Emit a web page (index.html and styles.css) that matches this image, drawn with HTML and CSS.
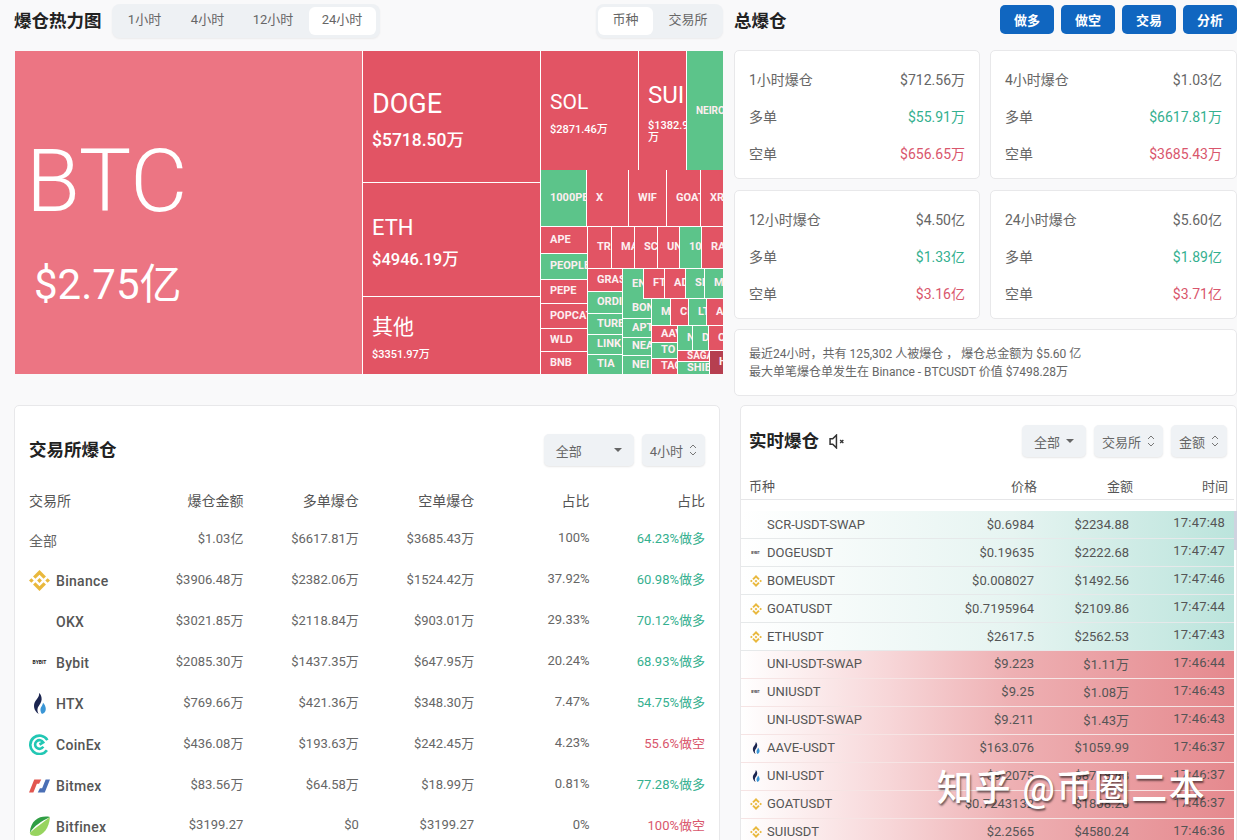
FILE: index.html
```html
<!DOCTYPE html>
<html lang="zh-CN">

<head>
  <meta charset="UTF-8" />
  <meta name="viewport" content="width=device-width, initial-scale=1.0" />
  <title>爆仓热力图</title>
  <link rel="stylesheet" href="styles.css">
</head>

<body>
  <svg class="defs" width="0" height="0">
    <symbol id="i-binance" viewBox="0 0 24 24">
      <path fill="#e9b83c" d="M7.34 10.08 12 5.42l4.66 4.66 2.71-2.71L12 0 4.63 7.37zM0 12l2.71-2.71L5.42 12l-2.71 2.71zM7.34 13.92 12 18.58l4.66-4.66 2.71 2.71L12 24l-7.37-7.37zM18.58 12l2.71-2.71L24 12l-2.71 2.71zM14.75 12 12 9.25 9.25 12 12 14.75z" />
    </symbol>
    <symbol id="i-htx" viewBox="0 0 24 24">
      <path fill="#1b2550" d="M11.5 0c.6 4-2.4 6.400-4.400 9.600C4.800 13.200 5 20 11.200 24 8.800 20.500 9.500 16.800 11.500 14.200c2.300-2.900 3.400-6 2.800-9.200C13.900 3 12.900 1 11.500 0z" />
      <path fill="#3a96d6" d="M16 11c-.1 2.200-1.500 3.800-2.400 5.600-1 2.200-.6 5.400 1.200 7.400 2.800-.8 4.400-3 4.400-5.800 0-2.700-1.400-5.400-3.200-7.200z" />
    </symbol>
    <symbol id="i-coinex" viewBox="0 0 24 24">
      <path fill="none" stroke="#22c7b4" stroke-width="3" d="M20.500 18.500A10.500 10.500 0 1 1 21 7" />
      <path fill="none" stroke="#22c7b4" stroke-width="3" d="M16.300 14.500a5 5 0 1 1 0-5L12 12" />
    </symbol>
    <symbol id="i-bitmex" viewBox="0 0 24 24">
      <path fill="#e2564f" d="M0 20 6 5h8l-2.500 5H9l-4 10z" />
      <path fill="#4a6fb5" d="M24 5 18 20h-8l2.500-5H15l4-10z" />
    </symbol>
    <symbol id="i-bitfinex" viewBox="0 0 24 24">
      <path fill="#2f9e44" d="M24 1C14-1 2 3 1 19c5-8 13-13 23-18z" />
      <path fill="#97d45f" d="M24 1c-1 14-10 25-21 21-1-.5-1.500-1.500-2-3C8 13 16 7 24 1z" />
    </symbol>
  </svg>

  <div class="page">
    <div class="col-left">
      <div class="head">
        <h1 class="title">爆仓热力图</h1>
        <div class="seg seg-time">
          <span class="seg-item">1小时</span>
          <span class="seg-item">4小时</span>
          <span class="seg-item">12小时</span>
          <span class="seg-item active">24小时</span>
        </div>
        <div class="seg seg-kind">
          <span class="seg-item active">币种</span>
          <span class="seg-item">交易所</span>
        </div>
      </div>

      <div class="heatmap" id="heatmap"></div>

      <div class="panel panel-ex">
        <div class="panel-head">
          <h2 class="title">交易所爆仓</h2>
          <div class="picks">
            <div class="pick pick-wide">全部
              <svg class="caret" width="8" height="4" viewBox="0 0 8 4"><path fill="#666" d="M0 0h8L4 4z" /></svg>
            </div>
            <div class="pick">4小时
              <svg class="updown" width="8" height="12" viewBox="0 0 8 12"><path fill="none" stroke="#777" d="M1 4l3-3 3 3M1 8l3 3 3-3" /></svg>
            </div>
          </div>
        </div>

        <table class="ex-table">
          <thead>
            <tr><th>交易所</th><th>爆仓金额</th><th>多单爆仓</th><th>空单爆仓</th><th>占比</th><th>占比</th></tr>
          </thead>
          <tbody>
            <tr>
              <td class="ex-all">全部</td>
              <td>$1.03亿</td><td>$6617.81万</td><td>$3685.43万</td><td>100%</td><td class="up">64.23%做多</td>
            </tr>
            <tr>
              <td><div class="ex"><svg class="ex-logo"><use href="#i-binance" /></svg>Binance</div></td>
              <td>$3906.48万</td><td>$2382.06万</td><td>$1524.42万</td><td>37.92%</td><td class="up">60.98%做多</td>
            </tr>
            <tr>
              <td><div class="ex"><span class="ex-logo"></span>OKX</div></td>
              <td>$3021.85万</td><td>$2118.84万</td><td>$903.01万</td><td>29.33%</td><td class="up">70.12%做多</td>
            </tr>
            <tr>
              <td><div class="ex"><span class="ex-logo bybit">BYBIT</span>Bybit</div></td>
              <td>$2085.30万</td><td>$1437.35万</td><td>$647.95万</td><td>20.24%</td><td class="up">68.93%做多</td>
            </tr>
            <tr>
              <td><div class="ex"><svg class="ex-logo"><use href="#i-htx" /></svg>HTX</div></td>
              <td>$769.66万</td><td>$421.36万</td><td>$348.30万</td><td>7.47%</td><td class="up">54.75%做多</td>
            </tr>
            <tr>
              <td><div class="ex"><svg class="ex-logo"><use href="#i-coinex" /></svg>CoinEx</div></td>
              <td>$436.08万</td><td>$193.63万</td><td>$242.45万</td><td>4.23%</td><td class="down">55.6%做空</td>
            </tr>
            <tr>
              <td><div class="ex"><svg class="ex-logo"><use href="#i-bitmex" /></svg>Bitmex</div></td>
              <td>$83.56万</td><td>$64.58万</td><td>$18.99万</td><td>0.81%</td><td class="up">77.28%做多</td>
            </tr>
            <tr>
              <td><div class="ex"><svg class="ex-logo"><use href="#i-bitfinex" /></svg>Bitfinex</div></td>
              <td>$3199.27</td><td>$0</td><td>$3199.27</td><td>0%</td><td class="down">100%做空</td>
            </tr>
          </tbody>
        </table>
      </div>
    </div>

    <div class="col-right">
      <div class="head">
        <h1 class="title">总爆仓</h1>
        <div class="actions">
          <button class="act">做多</button>
          <button class="act">做空</button>
          <button class="act">交易</button>
          <button class="act">分析</button>
        </div>
      </div>

      <div class="cards">
        <div class="card">
          <div class="line"><span>1小时爆仓</span><span>$712.56万</span></div>
          <div class="line"><span>多单</span><span class="up">$55.91万</span></div>
          <div class="line"><span>空单</span><span class="down">$656.65万</span></div>
        </div>
        <div class="card">
          <div class="line"><span>4小时爆仓</span><span>$1.03亿</span></div>
          <div class="line"><span>多单</span><span class="up">$6617.81万</span></div>
          <div class="line"><span>空单</span><span class="down">$3685.43万</span></div>
        </div>
        <div class="card">
          <div class="line"><span>12小时爆仓</span><span>$4.50亿</span></div>
          <div class="line"><span>多单</span><span class="up">$1.33亿</span></div>
          <div class="line"><span>空单</span><span class="down">$3.16亿</span></div>
        </div>
        <div class="card">
          <div class="line"><span>24小时爆仓</span><span>$5.60亿</span></div>
          <div class="line"><span>多单</span><span class="up">$1.89亿</span></div>
          <div class="line"><span>空单</span><span class="down">$3.71亿</span></div>
        </div>
      </div>

      <div class="notice">
        最近24小时，共有 125,302 人被爆仓 ， 爆仓总金额为 $5.60 亿<br>
        最大单笔爆仓单发生在 Binance - BTCUSDT 价值 $7498.28万
      </div>

      <div class="panel panel-live">
        <div class="panel-head">
          <div class="live-title">
            <h2 class="title">实时爆仓</h2>
            <svg class="mute" width="17" height="15" viewBox="0 0 16 14">
              <path fill="none" stroke="#333" stroke-width="1.400" d="M7 1v12L3.500 9.500H1v-5h2.500z" />
              <path fill="none" stroke="#333" stroke-width="1.300" d="M10.500 5.500l3 3M13.500 5.500l-3 3" />
            </svg>
          </div>
          <div class="picks">
            <div class="pick">全部
              <svg class="caret" width="8" height="4" viewBox="0 0 8 4"><path fill="#666" d="M0 0h8L4 4z" /></svg>
            </div>
            <div class="pick">交易所
              <svg class="updown" width="8" height="12" viewBox="0 0 8 12"><path fill="none" stroke="#777" d="M1 4l3-3 3 3M1 8l3 3 3-3" /></svg>
            </div>
            <div class="pick">金额
              <svg class="updown" width="8" height="12" viewBox="0 0 8 12"><path fill="none" stroke="#777" d="M1 4l3-3 3 3M1 8l3 3 3-3" /></svg>
            </div>
          </div>
        </div>

        <div class="live-head">
          <span>币种</span><span>价格</span><span>金额</span><span>时间</span>
        </div>

        <div class="live-list">
          <div class="thumb"></div>
          <div class="live long"><div class="coin">SCR-USDT-SWAP</div><span>$0.6984</span><span>$2234.88</span><span class="time">17:47:48</span></div>
          <div class="live long"><div class="coin"><span class="coin-bybit">BYBIT</span>DOGEUSDT</div><span>$0.19635</span><span>$2222.68</span><span class="time">17:47:47</span></div>
          <div class="live long"><div class="coin"><svg class="coin-logo"><use href="#i-binance" /></svg>BOMEUSDT</div><span>$0.008027</span><span>$1492.56</span><span class="time">17:47:46</span></div>
          <div class="live long"><div class="coin"><svg class="coin-logo"><use href="#i-binance" /></svg>GOATUSDT</div><span>$0.7195964</span><span>$2109.86</span><span class="time">17:47:44</span></div>
          <div class="live long"><div class="coin"><svg class="coin-logo"><use href="#i-binance" /></svg>ETHUSDT</div><span>$2617.5</span><span>$2562.53</span><span class="time">17:47:43</span></div>
          <div class="live short"><div class="coin">UNI-USDT-SWAP</div><span>$9.223</span><span>$1.11万</span><span class="time">17:46:44</span></div>
          <div class="live short"><div class="coin"><span class="coin-bybit">BYBIT</span>UNIUSDT</div><span>$9.25</span><span>$1.08万</span><span class="time">17:46:43</span></div>
          <div class="live short"><div class="coin">UNI-USDT-SWAP</div><span>$9.211</span><span>$1.43万</span><span class="time">17:46:43</span></div>
          <div class="live short"><div class="coin"><svg class="coin-logo"><use href="#i-htx" /></svg>AAVE-USDT</div><span>$163.076</span><span>$1059.99</span><span class="time">17:46:37</span></div>
          <div class="live short"><div class="coin"><svg class="coin-logo"><use href="#i-htx" /></svg>UNI-USDT</div><span>$9.2075</span><span>$8718.88</span><span class="time">17:46:37</span></div>
          <div class="live short"><div class="coin"><svg class="coin-logo"><use href="#i-binance" /></svg>GOATUSDT</div><span>$0.7243132</span><span>$1808.26</span><span class="time">17:46:37</span></div>
          <div class="live short"><div class="coin"><svg class="coin-logo"><use href="#i-binance" /></svg>SUIUSDT</div><span>$2.2565</span><span>$4580.24</span><span class="time">17:46:36</span></div>
        </div>
      </div>
    </div>
  </div>

  <div class="watermark">知乎 @币圈二本</div>

  <script>
    // name, x, y, w, h, colour, label size, value, value size
    const tiles = [
      ["BTC", 0, 0, 347, 323, "btc", 88, "$2.75亿", 42],
      ["DOGE", 348, 0, 177, 131, "red", 27, "$5718.50万", 17.5],
      ["ETH", 348, 132, 177, 113, "red", 22, "$4946.19万", 16.5],
      ["其他", 348, 246, 177, 77, "red", 21, "$3351.97万", 11],
      ["SOL", 526, 0, 97, 119, "red", 21, "$2871.46万", 11],
      ["SUI", 624, 0, 47, 119, "red", 24, "$1382.97万", 11],
      ["NEIRO", 672, 0, 36, 119, "green", 10],
      ["1000PE", 526, 119, 45, 56, "green", 11],
      ["X", 572, 119, 41, 56, "red", 11],
      ["WIF", 614, 119, 37, 56, "red", 11],
      ["GOAT", 652, 119, 33, 56, "red", 11],
      ["XR", 686, 119, 22, 56, "red", 11],
      ["APE", 526, 176, 46, 26, "red", 11],
      ["PEOPLE", 526, 203, 46, 25, "green", 11],
      ["PEPE", 526, 229, 46, 23, "red", 11],
      ["POPCAT", 526, 253, 46, 24, "red", 11],
      ["WLD", 526, 278, 46, 22, "red", 11],
      ["BNB", 526, 301, 46, 22, "red", 11],
      ["TR", 573, 176, 23, 41, "red", 11],
      ["MA", 597, 176, 22, 41, "red", 11],
      ["SC", 620, 176, 22, 41, "red", 11],
      ["UN", 643, 176, 21, 41, "red", 11],
      ["10", 665, 176, 21, 41, "green", 11],
      ["RA", 687, 176, 21, 41, "red", 11],
      ["GRAS", 573, 218, 34, 22, "red", 11],
      ["ORDI", 573, 241, 34, 21, "green", 11],
      ["TURB", 573, 263, 34, 20, "green", 11],
      ["LINK", 573, 284, 34, 19, "green", 11],
      ["TIA", 573, 304, 34, 19, "green", 11],
      ["EN", 608, 218, 20, 30, "green", 11],
      ["FT", 629, 218, 20, 29, "red", 11],
      ["AD", 650, 218, 20, 29, "red", 11],
      ["SI", 671, 218, 18, 29, "green", 11],
      ["M", 690, 218, 18, 29, "green", 11],
      ["BON", 608, 248, 28, 19, "green", 11],
      ["M", 637, 248, 18, 26, "green", 11],
      ["CI", 656, 248, 17, 26, "red", 11],
      ["LT", 674, 248, 17, 26, "green", 11],
      ["A", 692, 248, 16, 26, "red", 11],
      ["APT", 608, 268, 28, 18, "green", 11],
      ["NEA", 608, 287, 28, 17, "green", 11],
      ["NEI", 608, 305, 28, 18, "green", 11],
      ["AAV", 637, 275, 25, 16, "red", 11],
      ["TO", 637, 292, 25, 15, "green", 11],
      ["TAC", 637, 308, 25, 15, "red", 11],
      ["N", 663, 275, 14, 24, "green", 11],
      ["D", 678, 275, 15, 24, "green", 11],
      ["C", 694, 275, 14, 24, "red", 11],
      ["SAGA", 663, 300, 31, 10, "red", 10],
      ["SHIB", 663, 311, 31, 12, "green", 11],
      ["H", 695, 300, 13, 23, "dark", 11]
    ];

    const heatmap = document.getElementById("heatmap");
    tiles.forEach(([name, x, y, w, h, colour, size, value, valueSize]) => {
      const tile = document.createElement("div");
      tile.className = `tile ${colour}${value ? "" : " small"}`;
      tile.style.left = `${x}px`;
      tile.style.top = `${y}px`;
      tile.style.width = `${w}px`;
      tile.style.height = `${h}px`;
      tile.innerHTML = `<span class="tile-name" style="font-size:${size}px">${name}</span>` +
        (value ? `<span class="tile-value" style="font-size:${valueSize}px">${value}</span>` : "");
      heatmap.appendChild(tile);
    });
  </script>
</body>

</html>
```

FILE: styles.css
```css
* {
  box-sizing: border-box;
}

html,
body {
  margin: 0;
  height: 840px;
  overflow: hidden;
}

body {
  position: relative;
  width: 1237px;
  background: #f9f9fa;
  color: #666;
  font-family: Roboto, 'Noto Sans CJK SC', sans-serif;
  font-size: 13px;
}

.defs {
  position: absolute;
}

.page {
  display: flex;
  gap: 11px;
  height: 840px;
  padding-left: 14px;
  overflow: hidden;
}

.col-left {
  width: 709px;
  flex: none;
}

.col-right {
  width: 503px;
  flex: none;
}

.head {
  display: flex;
  align-items: center;
  height: 42px;
  margin-bottom: 8px;
}

.col-left .head {
  margin-bottom: 9px;
}

.title {
  margin: 0;
  padding-bottom: 3px;
  color: #222;
  font-size: 17.500px;
  font-weight: 700;
  white-space: nowrap;
}

.up {
  color: #35b08f;
}

.down {
  color: #d9566c;
}

/* segmented switches */
.seg {
  display: flex;
  padding: 3px 4px 3px 0;
  background: #eef1f4;
  border-radius: 8px;
  box-shadow: 0 1px 2px rgba(0, 0, 0, 0.06);
}

.seg-time {
  margin-left: 10px;
}

.seg-kind {
  margin-left: auto;
  padding-left: 2px;
  padding-right: 0;
}

.seg-item {
  height: 28px;
  line-height: 26px;
  text-align: center;
  color: #666;
  border-radius: 6px;
}

.seg-time .seg-item:nth-child(1) {
  width: 66px;
}

.seg-time .seg-item:nth-child(2) {
  width: 60px;
}

.seg-time .seg-item:nth-child(3) {
  width: 71px;
}

.seg-time .seg-item:nth-child(4) {
  width: 67px;
}

.seg-kind .seg-item {
  width: 55px;
}

.seg-kind .seg-item:last-child {
  width: 70px;
}

.seg-item.active {
  background: #fff;
}

/* heat map */
.heatmap {
  position: relative;
  width: 708px;
  height: 323px;
  margin-left: 1px;
  background: #fff;
}

.tile {
  position: absolute;
  display: flex;
  flex-direction: column;
  justify-content: center;
  padding: 6px 0 0 9px;
  overflow: hidden;
  color: #fff;
  line-height: 1.15;
}

.tile.red {
  background: #e25464;
}

.tile.green {
  background: #5cc48a;
}

.tile.btc {
  background: #ec7583;
  padding: 14px 0 0 11px;
}

.tile.dark {
  background: #b63f50;
}

.tile.small {
  padding-top: 0;
  font-weight: 700;
  white-space: nowrap;
  color: #fdeef0;
}

.tile-value {
  font-weight: 500;
  margin-top: 10px;
}

.tile.btc .tile-name {
  font-weight: 300;
}

.tile.btc .tile-value {
  font-weight: 400;
  margin: 30px 0 0 8px;
}

/* panels */
.panel {
  background: #fff;
  border: 1px solid #e8e8ea;
  border-radius: 5px;
}

.panel-ex {
  width: 706px;
  height: 500px;
  margin-top: 31px;
  padding: 28px 14px 0;
}

.panel-head {
  display: flex;
  align-items: center;
  justify-content: space-between;
}

.picks {
  display: flex;
  gap: 8px;
}

.pick {
  display: flex;
  align-items: center;
  justify-content: space-between;
  gap: 6px;
  height: 32px;
  padding: 0 8px;
  background: #eff2f5;
  border-radius: 5px;
  box-shadow: 0 1px 2px rgba(0, 0, 0, 0.1);
  color: #666;
}

.pick-wide {
  width: 90px;
  padding: 0 12px;
}

.panel-live .pick:first-child {
  padding: 0 12px;
}

.ex-table {
  width: 676px;
  margin-top: 15px;
  border-collapse: collapse;
  table-layout: fixed;
}

.ex-table th {
  height: 38px;
  padding: 0;
  font-size: 14px;
  font-weight: 400;
  color: #555;
  text-align: right;
}

.ex-table th:first-child {
  width: 99px;
  text-align: left;
}

.ex-table td {
  height: 41px;
  padding: 0 0 4px;
  text-align: right;
  white-space: nowrap;
}

.ex-table td:first-child {
  padding: 0;
  text-align: left;
}

.ex-table td.ex-all {
  font-size: 14px;
}

.ex {
  display: flex;
  align-items: center;
  gap: 6px;
  color: #555;
  font-size: 14px;
  font-weight: 500;
  letter-spacing: 0.3px;
}

.ex-logo {
  width: 21px;
  height: 21px;
  flex: none;
}

.bybit {
  color: #222;
  font-size: 5px;
  font-weight: 700;
  line-height: 21px;
  text-align: center;
  letter-spacing: 0;
}

/* right column */
.actions {
  display: flex;
  gap: 7px;
  margin: 0 0 3px auto;
}

.act {
  width: 54px;
  height: 29px;
  padding: 0;
  border: none;
  border-radius: 5px;
  background: #1066c0;
  color: #fff;
  font-family: inherit;
  font-size: 13px;
  font-weight: 700;
}

.cards {
  display: grid;
  grid-template-columns: 246px 247px;
  grid-auto-rows: 129px;
  gap: 11px 10px;
}

.card {
  padding: 9px 14px;
  background: #fff;
  border: 1px solid #e8e8ea;
  border-radius: 5px;
  font-size: 14px;
}

.line {
  display: flex;
  justify-content: space-between;
  align-items: center;
  height: 37px;
}

.notice {
  height: 67px;
  margin-top: 10px;
  padding: 15px 14px 0;
  background: #fff;
  border: 1px solid #e8e8ea;
  border-radius: 5px;
  font-size: 12px;
  line-height: 18px;
}

.panel-live {
  width: 497px;
  height: 500px;
  margin: 9px 0 0 6px;
  padding-top: 19px;
}

.panel-live .panel-head {
  width: 478px;
  margin-left: 8px;
}

.live-title {
  display: flex;
  align-items: center;
  gap: 10px;
}

.live-head {
  display: grid;
  grid-template-columns: 1fr 130px 96px 95px;
  align-items: center;
  width: 493px;
  height: 27px;
  margin-top: 16px;
  padding: 0 6px 2px 8px;
  border-bottom: 1px solid #e6e6e8;
  color: #555;
  font-size: 13px;
  text-align: right;
}

.live-head span:first-child {
  text-align: left;
}

.live-list {
  position: relative;
  margin-top: 11px;
  width: 493px;
}

/* list scrollbar, hangs past the rows */
.thumb {
  position: absolute;
  left: 100%;
  top: 0;
  width: 3px;
  height: 39px;
  background: #cfd3e0;
}

.live {
  display: grid;
  grid-template-columns: 1fr 130px 95px 96px;
  align-items: center;
  height: 28px;
  padding-right: 9px;
  border-bottom: 1px solid #e6e9ea;
  color: #555;
  text-align: right;
}

.live.long {
  background: linear-gradient(90deg, #fff 0%, #e6f4f1 55%, #bbe4dc 100%);
}

.live.short {
  padding-bottom: 2px;
  background: linear-gradient(90deg, #fff 0%, #f7d6d8 30%, #eeb0b3 55%, #e5898e 100%);
  border-bottom-color: #f6e4e4;
}

.coin {
  display: flex;
  align-items: center;
  padding-left: 26px;
  position: relative;
  text-align: left;
  white-space: nowrap;
}

.coin-logo {
  position: absolute;
  left: 9px;
  width: 12px;
  height: 12px;
}

.coin-bybit {
  position: absolute;
  left: 9px;
  width: 11px;
  color: #333;
  font-size: 3px;
  font-weight: 700;
  text-align: center;
}

.time {
  position: relative;
  top: -2px;
  letter-spacing: 0.2px;
}

.live.short .time {
  top: -1px;
}

.watermark {
  position: absolute;
  left: 937px;
  top: 759px;
  color: #fff;
  font-size: 36px;
  font-weight: 500;
  letter-spacing: 1.500px;
  white-space: nowrap;
  text-shadow: 1px 2px 2px rgba(0, 0, 0, 0.55);
}
```
